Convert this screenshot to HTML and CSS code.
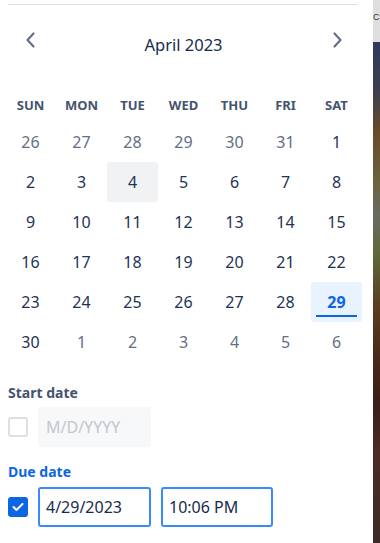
FILE: index.html
```html
<!DOCTYPE html>
<html lang="en">
<head>
    <meta charset="UTF-8">
    <meta name="viewport" content="width=device-width, initial-scale=1.0">
    <title>Dates</title>
    <link rel="stylesheet" href="styles.css">
</head>
<body>

    <!-- Date panel -->
    <div class="panel">
        <div class="divider"></div>

        <div class="calendar">
            <div class="cal-header">
                <button class="nav-btn" aria-label="Previous month">
                    <svg width="24" height="24" viewBox="0 0 24 24"><path d="M14.5 5.5 L8.5 12 L14.5 18.5" fill="none" stroke="#626f86" stroke-width="2.2" stroke-linecap="round" stroke-linejoin="round"/></svg>
                </button>
                <div class="cal-title">April 2023</div>
                <button class="nav-btn" aria-label="Next month">
                    <svg width="24" height="24" viewBox="0 0 24 24"><path d="M9.5 5.5 L15.5 12 L9.5 18.5" fill="none" stroke="#626f86" stroke-width="2.2" stroke-linecap="round" stroke-linejoin="round"/></svg>
                </button>
            </div>

            <div class="weekdays">
                <div>SUN</div><div>MON</div><div>TUE</div><div>WED</div><div>THU</div><div>FRI</div><div>SAT</div>
            </div>

            <div class="days">
                <div class="day other">26</div><div class="day other">27</div><div class="day other">28</div><div class="day other">29</div><div class="day other">30</div><div class="day other">31</div><div class="day">1</div>
                <div class="day">2</div><div class="day">3</div><div class="day today">4</div><div class="day">5</div><div class="day">6</div><div class="day">7</div><div class="day">8</div>
                <div class="day">9</div><div class="day">10</div><div class="day">11</div><div class="day">12</div><div class="day">13</div><div class="day">14</div><div class="day">15</div>
                <div class="day">16</div><div class="day">17</div><div class="day">18</div><div class="day">19</div><div class="day">20</div><div class="day">21</div><div class="day">22</div>
                <div class="day">23</div><div class="day">24</div><div class="day">25</div><div class="day">26</div><div class="day">27</div><div class="day">28</div><div class="day selected">29</div>
                <div class="day">30</div><div class="day other">1</div><div class="day other">2</div><div class="day other">3</div><div class="day other">4</div><div class="day other">5</div><div class="day other">6</div>
            </div>
        </div>

        <!-- Start date -->
        <div class="field-label">Start date</div>
        <div class="field-row">
            <span class="checkbox"></span>
            <input class="date-input" type="text" placeholder="M/D/YYYY" disabled>
        </div>

        <!-- Due date -->
        <div class="field-label active">Due date</div>
        <div class="field-row">
            <span class="checkbox checked">
                <svg width="12" height="10" viewBox="0 0 12 10"><path d="M1.5 5 L4.5 8 L10.5 2" fill="none" stroke="#fff" stroke-width="2" stroke-linecap="round" stroke-linejoin="round"/></svg>
            </span>
            <input class="date-input focus" type="text" value="4/29/2023">
            <input class="time-input focus" type="text" value="10:06 PM">
        </div>
    </div>

    <!-- Page behind the panel -->
    <div class="backdrop">
        <div class="backdrop-top">C</div>
        <div class="backdrop-img"></div>
    </div>

</body>
</html>
```

FILE: styles.css
```css
body {
    margin: 0;
    padding: 0;
    font-family: "Noto Sans", "Open Sans", sans-serif;
    color: #172b4d;
    display: flex;
    width: 380px;
    height: 543px;
    overflow: hidden;
    background: #fff;
}

/* Panel */
.panel {
    width: 373px;
    flex-shrink: 0;
    padding: 4px 0 0 8px;
    box-sizing: border-box;
    background: #fff;
}

.divider {
    width: 350px;
    height: 1px;
    background-color: #dfe1e6;
}

/* Calendar */
.calendar {
    width: 357px;
    margin-left: -3px;
}

.cal-header {
    display: flex;
    align-items: flex-start;
    margin-top: 19px;
    height: 32px;
}

.nav-btn {
    width: 51px;
    height: 32px;
    padding: 0;
    border: none;
    background: none;
    display: flex;
    align-items: center;
    justify-content: center;
    cursor: pointer;
}

.cal-title {
    flex-grow: 1;
    text-align: center;
    font-size: 16.5px;
    line-height: 20px;
    margin-top: 11px;
    color: #172b4d;
}

.weekdays {
    display: grid;
    grid-template-columns: repeat(7, 51px);
    margin-top: 32px;
    height: 34px;
    align-items: center;
}

.weekdays div {
    text-align: center;
    font-size: 13px;
    font-weight: 700;
    color: #44546f;
}

.days {
    display: grid;
    grid-template-columns: repeat(7, 51px);
    grid-auto-rows: 40px;
}

.day {
    position: relative;
    display: flex;
    align-items: center;
    justify-content: center;
    font-size: 16px;
    color: #1f3354;
    border-radius: 3px;
}

.day.other {
    color: #626f86;
}

.day.today {
    background-color: #f1f2f4;
}

.day.selected {
    background-color: #e9f2ff;
    color: #0c66e4;
    font-weight: 700;
}

.day.selected::after {
    content: "";
    position: absolute;
    left: 5px;
    right: 5px;
    bottom: 5px;
    height: 2px;
    background-color: #0c66e4;
}

/* Fields */
.field-label {
    margin-top: 21px;
    font-size: 14px;
    font-weight: 700;
    line-height: 20px;
    color: #44546f;
}

.field-label.active {
    margin-top: 15px;
    color: #0c66e4;
}

.field-row {
    display: flex;
    align-items: center;
    gap: 10px;
    margin-top: 4px;
}

.field-label.active + .field-row {
    margin-top: 5px;
}

.checkbox {
    width: 20px;
    height: 20px;
    box-sizing: border-box;
    border: 2px solid #dcdfe4;
    border-radius: 3px;
    display: flex;
    align-items: center;
    justify-content: center;
}

.checkbox.checked {
    background-color: #0c66e4;
    border-color: #0c66e4;
}

.date-input, .time-input {
    height: 40px;
    box-sizing: border-box;
    padding: 0 6px;
    border: 2px solid transparent;
    border-radius: 3px;
    font-family: inherit;
    font-size: 16px;
    color: #172b4d;
    background-color: #fff;
    outline: none;
}

.date-input {
    width: 113px;
}

.time-input {
    width: 112px;
}

.date-input:disabled {
    background-color: #f7f8f9;
}

.date-input::placeholder {
    color: #c1c7d0;
}

.focus {
    border-color: #388bff;
}

/* Background page */
.backdrop {
    flex-grow: 1;
    display: flex;
    flex-direction: column;
    overflow: hidden;
}

.backdrop-top {
    height: 42px;
    background-color: #dedede;
    color: #333;
    font-family: "Liberation Sans", sans-serif;
    font-size: 9px;
    line-height: 34px;
    flex-shrink: 0;
}

.backdrop-img {
    flex-grow: 1;
    background: linear-gradient(to bottom, #2c3a5c 0%, #3e3f4e 10%, #6a4a28 18%, #6a6440 28%, #6a6a62 35%, #5e6a3c 42%, #5a4022 52%, #4a2a1a 62%, #3a1e18 72%, #4a2c24 82%, #3c2a28 100%);
}
```
